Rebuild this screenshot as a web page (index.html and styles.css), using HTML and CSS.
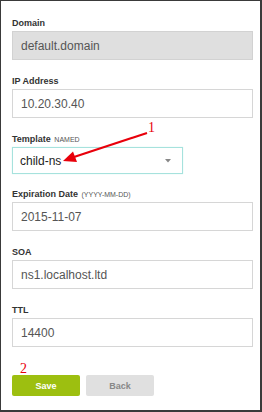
FILE: index.html
```html
<!DOCTYPE html>
<html lang="en">
<head>
  <meta charset="UTF-8" />
  <meta name="viewport" content="width=device-width, initial-scale=1.0"/>
  <title>Edit Domain</title>
  <link rel="stylesheet" href="styles.css">
</head>
<body>

<div class="page">
  <form class="form">
    <div class="field">
      <label>Domain</label>
      <input class="input readonly" type="text" value="default.domain" readonly>
    </div>

    <div class="field">
      <label>IP Address</label>
      <input class="input" type="text" value="10.20.30.40">
    </div>

    <div class="field field-select">
      <label>Template <span class="hint">NAMED</span></label>
      <div class="select">
        <span>child-ns</span>
        <svg class="caret" width="6" height="4" viewBox="0 0 6 4"><path d="M0 0h6L3 3.5z" fill="#888"/></svg>
      </div>
    </div>

    <div class="field">
      <label>Expiration Date <span class="hint">(YYYY-MM-DD)</span></label>
      <input class="input" type="text" value="2015-11-07">
    </div>

    <div class="field">
      <label>SOA</label>
      <input class="input" type="text" value="ns1.localhost.ltd">
    </div>

    <div class="field">
      <label>TTL</label>
      <input class="input" type="text" value="14400">
    </div>

    <div class="actions">
      <button type="button" class="btn save">Save</button>
      <button type="button" class="btn back">Back</button>
    </div>
  </form>

  <!-- annotations drawn over the form -->
  <span class="mark mark-1">1</span>
  <span class="mark mark-2">2</span>
  <svg class="arrow" width="262" height="412" viewBox="0 0 262 412">
    <line x1="147" y1="133" x2="74" y2="157" stroke="#e8000b" stroke-width="2.2"/>
    <path d="M63 161 L73 151.5 L77 162 Z" fill="#e8000b"/>
  </svg>
</div>

</body>
</html>
```

FILE: styles.css
```css
body {
  margin: 0;
  font-family: 'Liberation Sans', Arial, sans-serif;
  background: #fff;
}
.page {
  position: relative;
  width: 262px;
  height: 412px;
  box-sizing: border-box;
  border-style: solid;
  border-color: #3a3a3a;
  border-width: 1px 2px 2px 1px;
  background: #fff;
}
.form {
  padding: 16px 7px 0 11px;
}
.field {
  margin-bottom: 15px;
}
.field label {
  display: block;
  height: 12px;
  line-height: 12px;
  margin-bottom: 2px;
  font-size: 9px;
  font-weight: bold;
  color: #333;
}
.hint {
  font-size: 7px;
  font-weight: normal;
  color: #555;
  margin-left: 1px;
}
.input {
  display: block;
  width: 100%;
  height: 29px;
  box-sizing: border-box;
  margin: 0;
  padding: 0 8px;
  border: 1px solid #d6d6d6;
  border-radius: 0;
  background: #fff;
  font-family: inherit;
  font-size: 12px;
  color: #555;
  outline: none;
}
.readonly {
  background: #dfdfdf;
  border-color: #d2d2d2;
}
.field-select {
  margin-bottom: 14px;
}
.select {
  display: flex;
  align-items: center;
  justify-content: space-between;
  width: 171px;
  height: 27px;
  box-sizing: border-box;
  padding: 0 11px 0 7px;
  border: 1px solid #a6e2dd;
  box-shadow: 0 0 1px #c9f0ec;
  font-size: 12px;
  color: #222;
}
.caret {
  display: block;
}
.actions {
  display: flex;
  gap: 6px;
  margin-top: 28px;
}
.btn {
  width: 68px;
  height: 21px;
  padding: 0;
  border: none;
  border-radius: 2px;
  font-family: inherit;
  font-size: 9px;
  font-weight: bold;
  cursor: pointer;
}
.save {
  background: #9dbf10;
  color: #fff;
}
.back {
  background: #e0e0e0;
  color: #888;
}
.mark {
  position: absolute;
  font-family: 'Liberation Serif', 'Times New Roman', serif;
  font-size: 14px;
  line-height: 14px;
  color: #e8000b;
}
.mark-1 {
  left: 147px;
  top: 120px;
}
.mark-2 {
  left: 19px;
  top: 361px;
}
.arrow {
  position: absolute;
  left: -1px;
  top: -1px;
  pointer-events: none;
}
```
